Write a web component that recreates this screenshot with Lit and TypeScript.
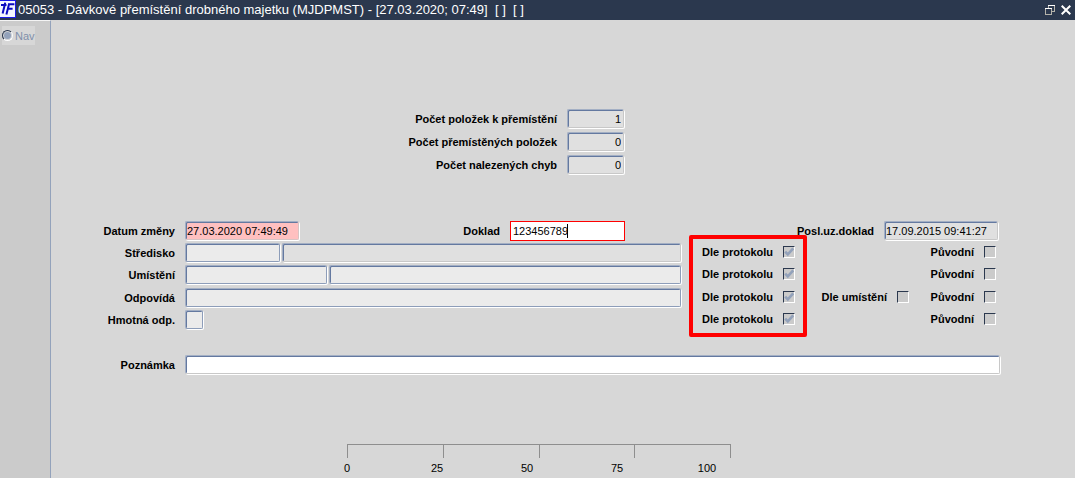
import { LitElement, html, css, nothing } from "lit";
import { customElement, property } from "lit/decorators.js";

interface Check {
  id: string;
  label: string;
  column: "protocol" | "place" | "original";
  checked: boolean;
}

interface Row {
  id: string;
  label: string;
  parts: { id: string; title: string; kind: string }[];
  checks: Check[];
}

const check = (id: string, column: Check["column"], label: string): Check => ({
  id: `${id}-${column}`,
  label,
  column,
  checked: column === "protocol",
});

const ROWS: Row[] = [
  {
    id: "stredisko",
    label: "Středisko",
    parts: [
      { id: "stredisko", title: "Kód", kind: "code" },
      { id: "stredisko-nazev", title: "Název", kind: "rest muted" },
    ],
    checks: [
      check("stredisko", "protocol", "Dle protokolu"),
      check("stredisko", "original", "Původní"),
    ],
  },
  {
    id: "umisteni",
    label: "Umístění",
    parts: [
      { id: "umisteni", title: "Kód", kind: "longcode" },
      { id: "umisteni-nazev", title: "Název", kind: "rest" },
    ],
    checks: [
      check("umisteni", "protocol", "Dle protokolu"),
      check("umisteni", "original", "Původní"),
    ],
  },
  {
    id: "odpovida",
    label: "Odpovídá",
    parts: [{ id: "odpovida", title: "Osoba", kind: "rest" }],
    checks: [
      check("odpovida", "protocol", "Dle protokolu"),
      check("odpovida", "place", "Dle umístění"),
      check("odpovida", "original", "Původní"),
    ],
  },
  {
    id: "hmotna",
    label: "Hmotná odp.",
    parts: [{ id: "hmotna", title: "Příznak", kind: "flag" }],
    checks: [
      check("hmotna", "protocol", "Dle protokolu"),
      check("hmotna", "original", "Původní"),
    ],
  },
];

const COUNTS = [
  { id: "count-move", label: "Počet položek k přemístění", value: "1" },
  { id: "count-moved", label: "Počet přemístěných položek", value: "0" },
  { id: "count-errors", label: "Počet nalezených chyb", value: "0" },
];

@customElement("title-bar")
class TitleBar extends LitElement {
  @property() heading = "";

  static styles = css`
    :host {
      display: flex;
      align-items: center;
      height: 20px;
      background: #2b384e;
      color: #fff;
      font: 13px/20px "Liberation Sans", Arial, sans-serif;
    }
    .logo {
      width: 16px;
      height: 18px;
      flex: none;
      align-self: flex-start;
    }
    h1 {
      flex: 1;
      margin: 0 0 0 2px;
      font: inherit;
      white-space: pre;
      overflow: hidden;
    }
    button {
      width: 16px;
      height: 20px;
      padding: 0;
      border: 0;
      background: none;
      display: flex;
      align-items: center;
      justify-content: center;
    }
    .buttons {
      display: flex;
      margin-right: 1px;
    }
  `;

  render() {
    return html`
      <svg class="logo" viewBox="0 0 16 18" aria-hidden="true">
        <path fill="#1a1ae6" d="M0 0h16v18H0z" />
        <path fill="#f4f6ff" d="M0 1h15v16H0z" />
        <g fill="none" stroke="#0a0ac0" stroke-width="2">
          <path d="M1 5h5.5M5.2 2.6 4.8 4.4M4.6 5.4 2.6 13.6" />
          <path d="M8 4.2h6.4M9 4.2 6.4 14.4M7.8 8.8h4.8" />
        </g>
      </svg>
      <h1>${this.heading}</h1>
      <div class="buttons">
        <button type="button" aria-label="Obnovit">
          <svg width="10" height="10" viewBox="0 0 10 10" shape-rendering="crispEdges">
            <path fill="#fff" d="M3 0h7v1H3zM0 3h7v1H0z" />
            <path fill="#b4b2aa" d="M3 1h1v2H3zM9 1h1v6H9zM7 6h2v1H7zM0 4h1v6H0zM6 4h1v6H6zM1 9h5v1H1z" />
          </svg>
        </button>
        <button type="button" aria-label="Zavřít">
          <svg width="10" height="10" viewBox="0 0 10 10">
            <path d="M.7.7l8.6 8.6M9.3.7.7 9.3" stroke="#fff" stroke-width="2" />
          </svg>
        </button>
      </div>
    `;
  }
}

@customElement("app-root")
class AppRoot extends LitElement {
  static styles = css`
    :host {
      display: flex;
      flex-direction: column;
      min-height: 100vh;
      background: #d7d7d7;
      color: #000;
      font: 11px/20px "Liberation Sans", Arial, sans-serif;
    }
    .body {
      flex: 1;
      display: flex;
    }
    .side {
      flex: none;
      width: 51px;
      box-sizing: border-box;
      padding: 5px 0 0 2px;
      background: #cbcbcb;
      border-top: 1px solid #f4f4f4;
      border-right: 1px solid #93a2bb;
    }
    .nav {
      display: inline-flex;
      align-items: center;
      gap: 2px;
      height: 19px;
      background: #d7d7d7;
      color: #7f90ab;
    }
    .nav label {
      font-weight: normal;
    }
    .nav input {
      appearance: none;
      box-sizing: border-box;
      width: 11px;
      height: 11px;
      margin: 0;
      border: 1px solid;
      border-color: #2b384e #fff #fff #2b384e;
      border-radius: 50%;
      background: #93a2bb;
      box-shadow: inset 0 0 0 1px #d7d7d7;
    }
    main {
      flex: 1;
      min-width: 0;
      padding: 89px 75px 0 0;
    }
    label {
      font-weight: bold;
      text-align: right;
      white-space: nowrap;
    }
    .field {
      box-sizing: border-box;
      height: 19px;
      min-width: 0;
      margin: 0;
      padding: 0 2px;
      border: 1px solid #8d9db9;
      border-top-color: #a3afc4;
      border-left-color: #a3afc4;
      border-radius: 2px;
      background: #ebebeb;
      box-shadow: inset 1px 1px 0 #6479a0, 1px 1px 0 #fff;
      color: #000;
      font: inherit;
      font-size: 11px;
      outline: none;
    }
    .muted {
      background: #e0e0e0;
      border-right-color: #c8c8c8;
      border-bottom-color: #c8c8c8;
    }
    .counts {
      display: grid;
      grid-template-columns: 506px 57px;
      column-gap: 10px;
      row-gap: 3px;
    }
    .counts .field {
      text-align: right;
    }
    form {
      display: grid;
      grid-template-columns: 124px minmax(0, 1fr) 117px 105px 89px;
      grid-auto-rows: 20px;
      row-gap: 2px;
      margin-top: 46px;
    }
    .name {
      grid-column: 1;
    }
    .parts {
      grid-column: 2;
      display: flex;
      gap: 2px;
      margin: 0 8px 0 10px;
    }
    .code {
      width: 95px;
    }
    .longcode {
      width: 142px;
    }
    .flag {
      width: 18px;
    }
    .rest {
      flex: 1;
    }
    .stamp {
      width: 114px;
      padding: 0 1px;
    }
    .pink {
      background: #ffc0c0;
      border-bottom-color: #d8c4c4;
      border-right-color: #d8c4c4;
    }
    .pair {
      display: flex;
      gap: 10px;
    }
    .doc {
      margin: 0 56px 0 auto;
    }
    .last {
      grid-column: 3 / 6;
      justify-content: flex-end;
      padding-right: 2px;
    }
    .active {
      position: relative;
      display: flex;
    }
    .active .field {
      width: 115px;
      height: 20px;
      border: 1px solid #f00;
      border-radius: 0;
      background: #fff;
      box-shadow: none;
    }
    .caret {
      position: absolute;
      left: calc(9ch + 2px);
      top: 3px;
      width: 1px;
      height: 14px;
      background: #000;
    }
    .tick {
      display: flex;
      align-items: center;
      justify-content: flex-end;
      gap: 10px;
      height: 18px;
    }
    .protocol {
      grid-column: 3;
      margin-right: 11px;
    }
    .place {
      grid-column: 4;
      margin-right: 2px;
    }
    .original {
      grid-column: 5;
      margin-right: 4px;
    }
    .box {
      position: relative;
      display: flex;
    }
    .box input {
      appearance: none;
      box-sizing: border-box;
      width: 12px;
      height: 12px;
      margin: 0;
      border: 1px solid;
      border-color: #2b384e #fff #fff #2b384e;
      background: #cbcbcb;
    }
    .box svg {
      position: absolute;
      left: 1px;
      top: 1px;
      pointer-events: none;
    }
    .mark {
      grid-area: 2 / 3 / 6 / 4;
      margin: -8px -1px -7px 0;
      border: 4px solid #f00;
      border-radius: 2px;
      pointer-events: none;
    }
    .main-rows {
      display: contents;
    }
    .note {
      grid-row: 7;
    }
    .notefield {
      grid-area: 7 / 2 / 8 / 6;
      margin-left: 10px;
      background: #fff;
      border-right-color: #c8c8c8;
      border-bottom-color: #c8c8c8;
    }
    form {
      grid-template-rows: 20px 20px 21px 20px 20px 21px 20px;
    }
    .scale {
      width: 384px;
      margin: 69px 0 0 296px;
    }
    .ticks {
      display: grid;
      grid-template-columns: repeat(4, 1fr);
      height: 13px;
      border: solid #8e8e8e;
      border-width: 1px 1px 0 0;
      box-sizing: border-box;
      height: 14px;
    }
    .ticks span {
      border-left: 1px solid #8e8e8e;
    }
    .numbers {
      display: flex;
      margin-left: -45px;
    }
    .numbers span {
      flex: none;
      width: 90px;
      text-align: center;
    }
  `;

  private tick(c: Check, row: number) {
    return html`
      <div class="tick ${c.column}" style="grid-row: ${row}">
        <label for=${c.id}>${c.label}</label>
        <span class="box">
          <input type="checkbox" id=${c.id} .checked=${c.checked} />
          ${c.checked
            ? html`<svg width="10" height="10" viewBox="0 0 10 10" aria-hidden="true">
                <path d="M1.2 4.6 3.8 7.4 9.2 1.4" fill="none" stroke="#93a2bb" stroke-width="2.6" />
              </svg>`
            : nothing}
        </span>
      </div>
    `;
  }

  private row(r: Row, index: number) {
    const line = index + 2;
    return html`
      <label class="name" for=${r.id} style="grid-row: ${line}">${r.label}</label>
      <div class="parts" style="grid-row: ${line}">
        ${r.parts.map(
          (p) => html`<input class="field ${p.kind}" id=${p.id} aria-label="${r.label} ${p.title}" readonly />`
        )}
      </div>
      ${r.checks.map((c) => this.tick(c, line))}
    `;
  }

  render() {
    return html`
      <title-bar
        heading="05053 - Dávkové přemístění drobného majetku (MJDPMST) - [27.03.2020; 07:49]  [ ]  [ ]"
      ></title-bar>
      <div class="body">
        <nav class="side">
          <span class="nav"><input type="radio" id="nav" disabled /><label for="nav">Nav</label></span>
        </nav>
        <main>
          <section class="counts">
            ${COUNTS.map(
              (c) => html`
                <label for=${c.id}>${c.label}</label>
                <input class="field muted" id=${c.id} .value=${c.value} readonly />
              `
            )}
          </section>
          <form>
            <label class="name" for="datum">Datum změny</label>
            <div class="parts">
              <input class="field pink stamp" id="datum" value="27.03.2020 07:49:49" />
              <div class="pair doc">
                <label for="doklad">Doklad</label>
                <span class="active">
                  <input class="field" id="doklad" value="123456789" />
                  <span class="caret"></span>
                </span>
              </div>
            </div>
            <div class="pair last">
              <label for="posledni">Posl.uz.doklad</label>
              <input class="field muted stamp" id="posledni" value="17.09.2015 09:41:27" readonly />
            </div>
            ${ROWS.map((r, i) => this.row(r, i))}
            <div class="mark"></div>
            <label class="name note" for="poznamka">Poznámka</label>
            <input class="field notefield" id="poznamka" />
          </form>
          <div class="scale">
            <div class="ticks"><span></span><span></span><span></span><span></span></div>
            <div class="numbers">
              ${[0, 25, 50, 75, 100].map((n) => html`<span>${n}</span>`)}
            </div>
          </div>
        </main>
      </div>
    `;
  }
}
